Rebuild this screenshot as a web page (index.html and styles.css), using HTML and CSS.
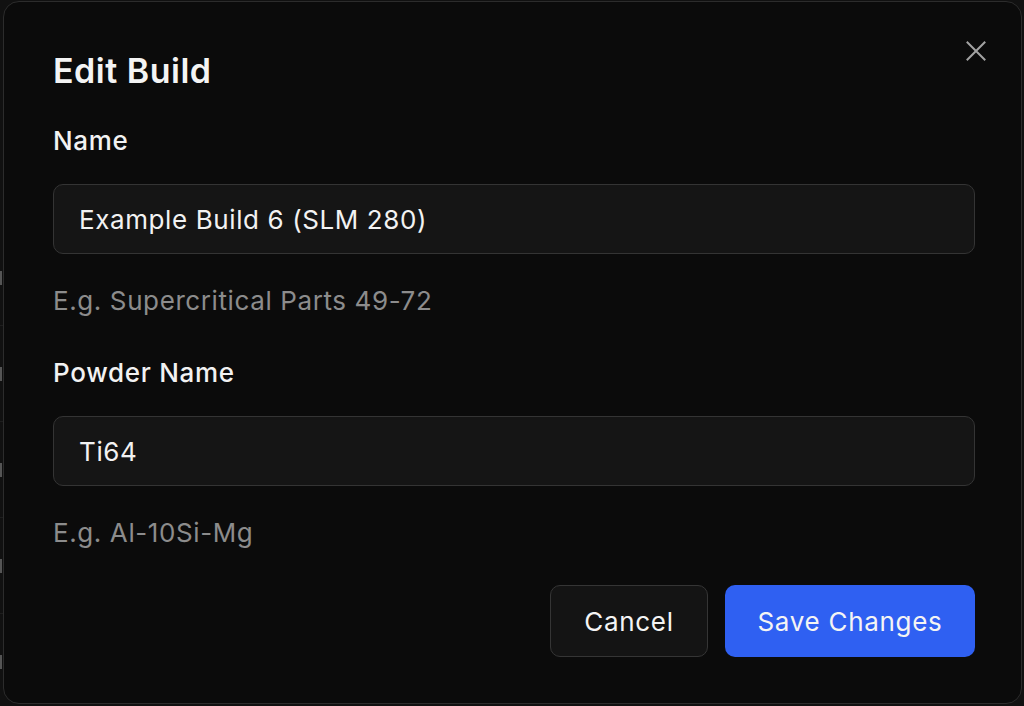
FILE: index.html
```html
<!DOCTYPE html>
<html lang="en">
<head>
<meta charset="utf-8">
<title>Edit Build</title>
<link rel="stylesheet" href="styles.css">
</head>
<body>
<div class="backdrop">
  <div class="bg-rows">
    <div class="bg-row"><span class="bg-mark"></span></div>
    <div class="bg-row"><span class="bg-mark"></span></div>
    <div class="bg-row"><span class="bg-mark"></span></div>
    <div class="bg-row"><span class="bg-mark"></span></div>
    <div class="bg-row"><span class="bg-mark"></span></div>
  </div>
  <div class="modal" role="dialog" aria-labelledby="title">
    <button class="close" aria-label="Close">
      <svg width="22" height="22" viewBox="0 0 22 22" fill="none" stroke="currentColor" stroke-width="2" stroke-linecap="square">
        <path d="M2.5 2.5 L19.5 19.5 M19.5 2.5 L2.5 19.5"/>
      </svg>
    </button>
    <h1 id="title" class="title">Edit Build</h1>
    <div class="field">
      <label class="label" for="name">Name</label>
      <div class="input" id="name">Example Build 6 (SLM 280)</div>
      <p class="help">E.g. Supercritical Parts 49-72</p>
    </div>
    <div class="field">
      <label class="label" for="powder">Powder Name</label>
      <div class="input" id="powder">Ti64</div>
      <p class="help">E.g. Al-10Si-Mg</p>
    </div>
    <div class="actions">
      <button class="btn btn-secondary">Cancel</button>
      <button class="btn btn-primary">Save Changes</button>
    </div>
  </div>
</div>
</body>
</html>
```

FILE: styles.css
```css
* { box-sizing: border-box; }
html, body { margin: 0; height: 100%; }
body {
  background: #111111;
  font-family: Inter, "Noto Sans", "Liberation Sans", sans-serif;
  color: #f2f2f2;
  overflow: hidden;
}
.backdrop {
  position: relative;
  height: 706px;
  padding: 1px 2px 2px 3px;
  overflow: hidden;
}
.bg-rows {
  position: absolute;
  left: 0;
  top: 230px;
  width: 3px;
  display: flex;
  flex-direction: column;
}
.bg-row {
  height: 96px;
  border-bottom: 1px solid #1e1e1e;
  display: flex;
  align-items: center;
}
.bg-mark {
  width: 2px;
  height: 14px;
  background: #555;
}
.modal {
  position: relative;
  height: 703px;
  background: #0b0b0b;
  border: 1px solid #2c2c2c;
  border-radius: 16px;
  padding: 49px 46px 0 49px;
  display: flex;
  flex-direction: column;
}
.close {
  position: absolute;
  top: 36px;
  right: 32px;
  width: 26px;
  height: 26px;
  padding: 2px;
  border: 0;
  background: transparent;
  color: #a3a3a3;
  display: flex;
  align-items: center;
  justify-content: center;
}
.title {
  margin: 0;
  font-size: 34px;
  line-height: 40px;
  font-weight: 600;
  color: #f4f4f4;
  letter-spacing: 0.5px;
}
.field {
  display: flex;
  flex-direction: column;
  margin-top: 34px;
}
.field + .field { margin-top: 40px; }
.label {
  font-size: 26px;
  line-height: 32px;
  font-weight: 500;
  color: #f2f2f2;
  letter-spacing: 0.7px;
}
.input {
  margin-top: 27px;
  height: 70px;
  border: 1.5px solid #343434;
  border-radius: 10px;
  background: #151515;
  padding: 0 25px;
  display: flex;
  align-items: center;
  font-size: 26px;
  color: #f2f2f2;
  letter-spacing: 0.6px;
}
.help {
  margin: 31px 0 0;
  font-size: 26px;
  line-height: 32px;
  color: #8c8c8c;
  letter-spacing: 0.6px;
}
.actions {
  margin-top: 36px;
  display: flex;
  justify-content: flex-end;
  gap: 17px;
}
.btn {
  height: 72px;
  border-radius: 10px;
  font-family: inherit;
  font-size: 26px;
  font-weight: 400;
  color: #f4f4f4;
  letter-spacing: 0.7px;
  display: flex;
  align-items: center;
  justify-content: center;
}
.btn-secondary {
  width: 158px;
  background: #141414;
  border: 1.5px solid #353535;
}
.btn-primary {
  width: 250px;
  background: #2f60f2;
  border: 0;
}
```
